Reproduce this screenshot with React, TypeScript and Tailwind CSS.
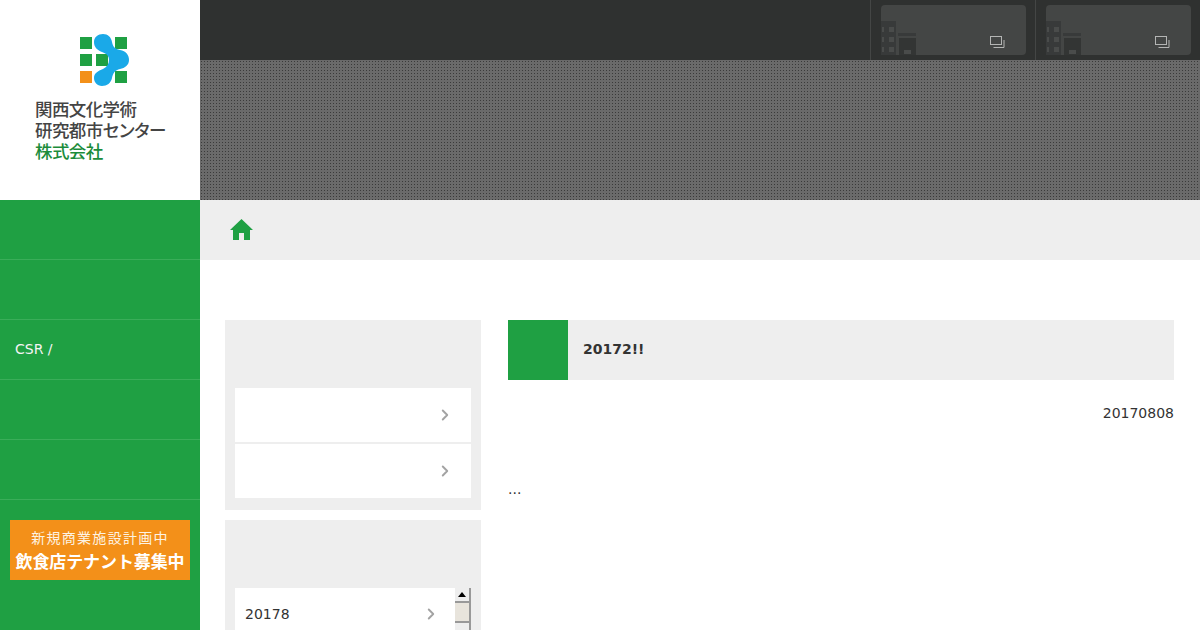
import React from 'react';
import { ChevronRight } from 'lucide-react';

const jp = 'font-["Noto_Sans_CJK_JP",sans-serif]';

const Logo = () => (
    <svg width="50" height="54" viewBox="0 0 50 54" className="ml-[80px]">
        <rect x="0" y="3" width="12" height="12" fill="#1fa043" />
        <rect x="35" y="3" width="12" height="12" fill="#1fa043" />
        <rect x="0" y="20" width="12" height="12" fill="#1fa043" />
        <rect x="16" y="20" width="12" height="12" fill="#1fa043" />
        <rect x="0" y="37" width="12" height="12" fill="#f39019" />
        <rect x="35" y="37" width="12" height="12" fill="#1fa043" />
        <path
            d="M14 8 C14 3 18 0 23 0 C28 0 31 3 32 8 C33 13 35 15 40 16 C46 17 49 21 49 26 C49 31 45 34 40 35 C35 36 33 39 32 44 C31 49 27 52 22 52 C17 52 14 48 14 44 C14 39 18 37 23 35 C27 33 29 30 29 26 C29 22 27 20 22 18 C17 16 14 13 14 8 Z"
            fill="#1aa9e8"
        />
    </svg>
);

const Building = () => (
    <svg width="36" height="34" viewBox="0 0 36 34" className="absolute left-0 bottom-0">
        <rect x="0" y="0" width="15" height="34" fill="#383a3a" />
        <rect x="1" y="6" width="2" height="5" fill="#4a4c4b" />
        <rect x="8" y="6" width="5" height="5" fill="#4a4c4b" />
        <rect x="1" y="16" width="2" height="5" fill="#4a4c4b" />
        <rect x="8" y="16" width="5" height="5" fill="#4a4c4b" />
        <rect x="1" y="26" width="2" height="5" fill="#4a4c4b" />
        <rect x="8" y="26" width="5" height="5" fill="#4a4c4b" />
        <rect x="17" y="12" width="18" height="3" fill="#383a3a" />
        <rect x="18" y="17" width="17" height="17" fill="#333534" />
        <rect x="23" y="29" width="7" height="4" fill="#4a4c4b" />
    </svg>
);

const WindowIcon = () => (
    <svg width="15" height="13" viewBox="0 0 15 13" fill="none" stroke="#b4b5b4" strokeWidth="1" className="absolute right-[21px] bottom-[6px]">
        <rect x="0.5" y="0.5" width="11" height="8" />
        <path d="M14 4 V11.5 H3.5" />
    </svg>
);

const HeaderCard = () => (
    <div className="relative w-[165px] h-[60px] border-l border-[#444645] pl-[10px] pt-[5px] pr-[9px]">
        <div className="relative h-[50px] rounded-[4px] bg-[#444645]">
            <Building />
            <WindowIcon />
        </div>
    </div>
);

const Chevron = () => <ChevronRight size={18} strokeWidth={2.5} className="text-[#a3a3a3]" />;

const navItems = ['', '', 'CSR /', '', ''];

export default function App() {
    return (
        <div className="flex w-[1200px] h-[630px] overflow-hidden bg-white font-['DejaVu_Sans',sans-serif] text-[14px] text-[#333]">
            {/* Sidebar */}
            <aside className="w-[200px] shrink-0 bg-[#1fa043]">
                <div className="h-[200px] bg-white pt-[34px]">
                    <Logo />
                    <div className={`mt-[10px] ml-[35px] text-[17.5px] leading-[21px] tracking-[-0.6px] font-medium text-[#444] whitespace-nowrap ${jp}`}>
                        <p>関西文化学術</p>
                        <p>研究都市<span className="tracking-[-2px]">センター</span></p>
                        <p className="text-[#1b8c3a]">株式会社</p>
                    </div>
                </div>
                <nav>
                    {navItems.map((item, i) => (
                        <div key={i} className="flex items-center h-[60px] px-[15px] border-b border-[#3aad59] text-[#f4f4f4] text-[14px]">
                            {item}
                        </div>
                    ))}
                </nav>
                <div className={`mx-[10px] mt-[20px] h-[60px] bg-[#f39019] text-center whitespace-nowrap ${jp}`}>
                    <p className="pt-[6px] text-[14px] leading-[22px] tracking-[1.3px] text-[#fdf3e3]">新規商業施設計画中</p>
                    <p className="text-[17px] leading-[25px] font-bold text-white tracking-[-0.1px]">飲食店テナント募集中</p>
                </div>
            </aside>

            <main className="flex-1 min-w-0">
                {/* Top bar */}
                <div className="flex justify-end h-[60px] bg-[#2f3130]">
                    <HeaderCard />
                    <HeaderCard />
                </div>
                <div className="h-[140px] bg-[#6a6a6a] bg-[radial-gradient(#3a3a3a_1px,transparent_1px)] bg-[length:3px_3px]" />

                {/* Breadcrumb */}
                <div className="flex items-center h-[60px] pb-[1px] pl-[30px] bg-[#eee]">
                    <svg width="23" height="21" viewBox="0 0 23 21" fill="#1fa043">
                        <path d="M11.5 0 L23 11 H20 V21 H14 V14 H9 V21 H3 V11 H0 Z" />
                    </svg>
                </div>

                <div className="flex pt-[60px] pl-[25px] pr-[26px]">
                    {/* Side column */}
                    <div className="w-[256px] shrink-0">
                        <div className="h-[190px] bg-[#eee] p-[10px] pt-[68px]">
                            <div className="flex items-center justify-end h-[54px] bg-white pr-[17px]">
                                <Chevron />
                            </div>
                            <div className="flex items-center justify-end h-[54px] mt-[2px] bg-white pr-[17px]">
                                <Chevron />
                            </div>
                        </div>
                        <div className="mt-[10px] h-[130px] bg-[#eee] px-[10px] pt-[68px]">
                            <div className="flex h-[62px]">
                                <div className="flex items-center justify-between flex-1 h-[52px] bg-white pl-[10px] pr-[15px]">
                                    <span>20178</span>
                                    <Chevron />
                                </div>
                                <div className="w-[16px] h-[42px] bg-[#eee] border-r-2 border-[#999]">
                                    <div className="flex items-center justify-center h-[15px] border-b-2 border-[#999]">
                                        <div className="w-0 h-0 border-x-[4px] border-x-transparent border-b-[5px] border-b-black" />
                                    </div>
                                    <div className="h-[20px] bg-[#e8e4dc] border-b-2 border-[#999]" />
                                </div>
                            </div>
                        </div>
                    </div>

                    {/* Article */}
                    <div className="ml-[27px] flex-1 min-w-0">
                        <div className="flex items-center h-[60px] pb-[2px] bg-[#eee]">
                            <div className="w-[60px] h-[60px] mb-[-2px] bg-[#1fa043]" />
                            <h1 className="ml-[15px] font-bold text-[14px]">20172!!</h1>
                        </div>
                        <p className="mt-[24px] text-right leading-[18px]">20170808</p>
                        <p className="mt-[58px] leading-[18px]">...</p>
                    </div>
                </div>
            </main>
        </div>
    );
}
